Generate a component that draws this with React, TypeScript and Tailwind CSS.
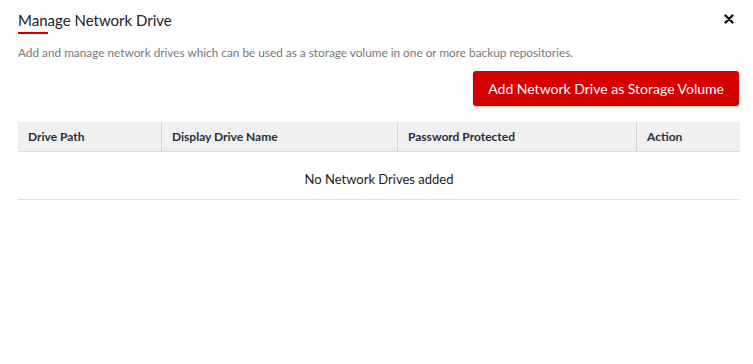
import React from "react";

const cols = [
  { label: "Drive Path", w: "w-[144px]" },
  { label: "Display Drive Name", w: "w-[236px]" },
  { label: "Password Protected", w: "w-[239px]" },
  { label: "Action", w: "flex-1" },
];

export default function App() {
  return (
    <div className="min-h-[364px] w-[753px] bg-white font-['Lato','Open_Sans',sans-serif] text-[#333]">
      <div className="px-[18px] pt-[11px]">
        <div className="flex items-start justify-between">
          <div>
            <h1 className="text-[15px] leading-[18px] text-[#222]">Manage Network Drive</h1>
            <div className="mt-[3px] h-[2px] w-[30px] bg-[#d40000]" />
          </div>
          <button className="mt-[3px] mr-[1px] text-[#111]">
            <svg width="10" height="10" viewBox="0 0 10 10">
              <path d="M1.5 1.5 L8.5 8.5 M8.5 1.5 L1.5 8.5" stroke="currentColor" strokeWidth="2.4" strokeLinecap="round" />
            </svg>
          </button>
        </div>
        <p className="mt-[12px] text-[11.8px] leading-[14px] text-[#777]">
          Add and manage network drives which can be used as a storage volume in one or more backup repositories.
        </p>
        <div className="mt-[11px] flex justify-end">
          <button className="-mr-[4px] h-[35px] rounded-[3px] bg-[#d40000] px-[15px] text-[14px] text-white shadow-[0_1px_2px_rgba(0,0,0,0.25)]">
            Add Network Drive as Storage Volume
          </button>
        </div>
        <div className="mt-[16px] w-[722px]">
          <div className="flex h-[30px] border-b border-[#dcdcdc] bg-[#f0f0f0] text-[12px] font-bold text-[#2a2f3a]">
            {cols.map((c, i) => (
              <div
                key={c.label}
                className={`${c.w} flex items-center px-[10px] ${i < cols.length - 1 ? "border-r border-[#d4d4d4]" : ""}`}
              >
                {c.label}
              </div>
            ))}
          </div>
          <div className="h-[48px] border-b border-[#e2e2e2] pt-[19px] text-center text-[13px] leading-[16px] text-[#222]">
            No Network Drives added
          </div>
        </div>
      </div>
    </div>
  );
}
